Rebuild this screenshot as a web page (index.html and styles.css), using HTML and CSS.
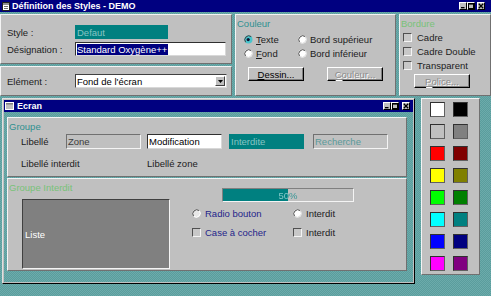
FILE: index.html
```html
<!DOCTYPE html>
<html lang="fr">
<head>
  <meta charset="UTF-8">
  <title>Définition des Styles - DEMO</title>
  <link rel="stylesheet" href="styles.css">
</head>
<body>
<div class="window main">
  <div class="titlebar">
    <svg class="ticon" width="8" height="9" viewBox="0 0 8 9">
      <rect x="0.5" y="0.5" width="7" height="8" fill="#fff" stroke="#202020"/>
      <rect x="1" y="1" width="6" height="2" fill="#909090"/>
      <path d="M2 4.5h4M2 6.5h4" stroke="#707070"/>
    </svg>
    <span class="caption">Définition des Styles - DEMO</span>
    <span class="ctrls">
      <span class="ctrl"><svg width="6" height="6" viewBox="0 0 6 6"><rect x="1" y="4" width="3.5" height="1.3" fill="#000"/></svg></span>
      <span class="ctrl"><svg width="6" height="6" viewBox="0 0 6 6"><rect x="0.5" y="0.5" width="5" height="5" fill="none" stroke="#000"/><rect x="0" y="0" width="6" height="1.6" fill="#000"/></svg></span>
      <span class="ctrl close"><svg width="6" height="6" viewBox="0 0 6 6"><path d="M0.8 0.8L5.2 5.2M5.2 0.8L0.8 5.2" stroke="#000" stroke-width="1.3"/></svg></span>
    </span>
  </div>
  <div class="main-body">
    <div class="left-col">
      <div class="panel ident">
        <span class="lbl">Style :</span>
        <span class="field teal style-f">Defaut</span>
        <span class="lbl">Désignation :</span>
        <span class="field white desig-f"><span class="sel">Standard Oxygène++</span></span>
      </div>
      <div class="panel elem">
        <span class="lbl">Elément :</span>
        <span class="combo">
          <span class="combo-text">Fond de l'écran</span>
          <span class="combo-btn"><svg width="5" height="3" viewBox="0 0 5 3"><path d="M0 0h5L2.5 3z" fill="#000"/></svg></span>
        </span>
      </div>
    </div>

    <div class="panel couleur">
      <div class="gtitle teal-t">Couleur</div>
      <div class="radios">
        <span class="opt">
          <svg class="radio" width="9" height="9" viewBox="0 0 9 9"><circle cx="4.5" cy="4.5" r="4" fill="#48c4cc"/><path d="M1.6 7.2A4 4 0 0 1 7.2 1.6" fill="none" stroke="#404040"/><circle cx="4.2" cy="4.6" r="1.6" fill="#101030"/></svg>
          <span><u>T</u>exte</span>
        </span>
        <span class="opt">
          <svg class="radio" width="9" height="9" viewBox="0 0 9 9"><circle cx="4.5" cy="4.5" r="4" fill="#fff"/><path d="M1.6 7.2A4 4 0 0 1 7.2 1.6" fill="none" stroke="#505050"/><path d="M7.4 1.8A4 4 0 0 1 1.8 7.4" fill="none" stroke="#dcdcdc"/></svg>
          <span>Bord supérieur</span>
        </span>
        <span class="opt">
          <svg class="radio" width="9" height="9" viewBox="0 0 9 9"><circle cx="4.5" cy="4.5" r="4" fill="#fff"/><path d="M1.6 7.2A4 4 0 0 1 7.2 1.6" fill="none" stroke="#505050"/><path d="M7.4 1.8A4 4 0 0 1 1.8 7.4" fill="none" stroke="#dcdcdc"/></svg>
          <span><u>F</u>ond</span>
        </span>
        <span class="opt">
          <svg class="radio" width="9" height="9" viewBox="0 0 9 9"><circle cx="4.5" cy="4.5" r="4" fill="#fff"/><path d="M1.6 7.2A4 4 0 0 1 7.2 1.6" fill="none" stroke="#505050"/><path d="M7.4 1.8A4 4 0 0 1 1.8 7.4" fill="none" stroke="#dcdcdc"/></svg>
          <span>Bord inférieur</span>
        </span>
      </div>
      <div class="btn-row">
        <span class="btn"><span><u>D</u>essin...</span></span>
        <span class="btn disabled"><span><u>C</u>ouleur...</span></span>
      </div>
    </div>

    <div class="panel bordure">
      <div class="gtitle green-t">Bordure</div>
      <div class="chk"><span class="box"></span>Cadre</div>
      <div class="chk"><span class="box"></span>Cadre Double</div>
      <div class="chk"><span class="box"></span>Transparent</div>
      <span class="btn disabled police"><span><u>P</u>olice...</span></span>
    </div>
  </div>
</div>

<div class="lower">
  <div class="window ecran">
    <div class="titlebar">
      <svg class="ticon" width="9" height="8" viewBox="0 0 9 8">
        <rect x="0.5" y="0.5" width="8" height="7" fill="#c0c0c0" stroke="#fff"/>
        <rect x="1" y="1" width="7" height="1.5" fill="#808080"/>
      </svg>
      <span class="caption">Ecran</span>
      <span class="ctrls">
        <span class="ctrl"><svg width="6" height="6" viewBox="0 0 6 6"><rect x="1" y="4" width="3.5" height="1.3" fill="#000"/></svg></span>
        <span class="ctrl"><svg width="6" height="6" viewBox="0 0 6 6"><rect x="0.5" y="0.5" width="5" height="5" fill="none" stroke="#000"/><rect x="0" y="0" width="6" height="1.6" fill="#000"/></svg></span>
        <span class="ctrl close"><svg width="6" height="6" viewBox="0 0 6 6"><path d="M0.8 0.8L5.2 5.2M5.2 0.8L0.8 5.2" stroke="#000" stroke-width="1.3"/></svg></span>
      </span>
    </div>
    <div class="client">
      <div class="panel groupe">
        <div class="gtitle teal-t">Groupe</div>
        <div class="g-row">
          <span class="g-lbl">Libellé</span>
          <span class="field sunk zone">Zone</span>
          <span class="field white modif">Modification</span>
          <span class="field teal interd">Interdite</span>
          <span class="field sunk rech">Recherche</span>
        </div>
        <div class="g-row2">
          <span class="g-lbl2">Libellé interdit</span>
          <span>Libellé zone</span>
        </div>
      </div>
      <div class="panel groupe-int">
        <div class="gi-left">
          <div class="gtitle green-t">Groupe Interdit</div>
          <div class="liste">Liste</div>
        </div>
        <div class="gi-right">
          <div class="progress">
            <span class="progress-text">50%</span>
          </div>
          <div class="gi-line first">
            <span class="opt wide navy">
              <svg class="radio" width="9" height="9" viewBox="0 0 9 9"><circle cx="4.5" cy="4.5" r="4" fill="#e8e8e8"/><path d="M1.6 7.2A4 4 0 0 1 7.2 1.6" fill="none" stroke="#505050"/><path d="M7.4 1.8A4 4 0 0 1 1.8 7.4" fill="none" stroke="#fff"/></svg>
              <span>Radio bouton</span>
            </span>
            <span class="opt">
              <svg class="radio" width="9" height="9" viewBox="0 0 9 9"><circle cx="4.5" cy="4.5" r="4" fill="#fff"/><path d="M1.6 7.2A4 4 0 0 1 7.2 1.6" fill="none" stroke="#505050"/><path d="M7.4 1.8A4 4 0 0 1 1.8 7.4" fill="none" stroke="#dcdcdc"/></svg>
              <span>Interdit</span>
            </span>
          </div>
          <div class="gi-line">
            <span class="opt wide navy"><span class="box"></span><span>Case à cocher</span></span>
            <span class="opt"><span class="box"></span><span>Interdit</span></span>
          </div>
        </div>
      </div>
    </div>
  </div>

  <div class="panel palette">
    <span class="sw" style="background:#ffffff"></span>
    <span class="sw" style="background:#000000"></span>
    <span class="sw" style="background:#c0c0c0"></span>
    <span class="sw" style="background:#808080"></span>
    <span class="sw" style="background:#ff0000"></span>
    <span class="sw" style="background:#800000"></span>
    <span class="sw" style="background:#ffff00"></span>
    <span class="sw" style="background:#808000"></span>
    <span class="sw" style="background:#00ff00"></span>
    <span class="sw" style="background:#008000"></span>
    <span class="sw" style="background:#00ffff"></span>
    <span class="sw" style="background:#008080"></span>
    <span class="sw" style="background:#0000ff"></span>
    <span class="sw" style="background:#000080"></span>
    <span class="sw" style="background:#ff00ff"></span>
    <span class="sw" style="background:#800080"></span>
  </div>
</div>
</body>
</html>
```

FILE: styles.css
```css
html,body{
    margin:0;
}
body{
    width:491px;
    height:296px;
    overflow:hidden;
    background:#62a3a3;
    background-image:repeating-conic-gradient(#5a9d9d 0 25%, #6cabab 0 50%);
    background-size:2px 2px;
    font-family:"Liberation Sans", Arial, sans-serif;
    font-size:9.5px;
    color:#1c1c1c;
}
*{
    box-sizing:border-box;
}

/* title bars */
.titlebar{
    display:flex;
    align-items:center;
    height:12px;
    background:#000080;
    color:#fff;
    font-weight:bold;
    font-size:9px;
}
.main .titlebar{
    padding:0 6px 0 2px;
}
.ecran .titlebar{
    padding:0 3px 0 1px;
}
.ticon{
    margin-right:2px;
    flex:none;
}
.ecran .ticon{
    margin-right:3px;
}
.caption{
    flex:1;
    white-space:nowrap;
}
.ctrls{
    display:flex;
    gap:0;
}
.ctrl{
    display:flex;
    align-items:center;
    justify-content:center;
    width:8px;
    height:8px;
    background:#c0c0c0;
    border:1px solid;
    border-color:#fff #000 #000 #fff;
}
.ctrl.close{
    margin-left:2px;
}
.ecran .ctrl.close{
    margin-left:3px;
}

/* panels */
.panel{
    background:#c0c0c0;
    border:1px solid;
    border-color:#f4f4f4 #707070 #707070 #f4f4f4;
}
.gtitle{
    line-height:11px;
    padding:3px 0 0 1px;
    white-space:nowrap;
}
.teal-t{ color:#2f9090; }
.green-t{ color:#78c278; }

.main-body{
    display:flex;
    gap:3px;
    height:86px;
    padding:2px 0;
}
.left-col{
    display:flex;
    flex-direction:column;
    gap:2px;
    width:232px;
}
.ident{
    display:grid;
    grid-template-columns:68px auto;
    grid-auto-rows:14px;
    row-gap:3px;
    align-items:center;
    height:50px;
    padding:10px 0 0 6px;
}
.elem{
    flex:1;
    display:flex;
    align-items:center;
    padding-left:6px;
}
.elem .lbl{
    width:68px;
}

/* fields */
.field{
    display:flex;
    align-items:center;
    height:14px;
    padding-left:2px;
    white-space:nowrap;
    overflow:hidden;
}
.field.teal{
    background:#008080;
    color:#86c4c4;
}
.field.white{
    background:#fff;
    color:#000;
    border:1px solid;
    border-color:#303030 #d8d8d8 #d8d8d8 #303030;
    padding-left:1px;
}
.field.sunk{
    background:#c0c0c0;
    border:1px solid;
    border-color:#707070 #f4f4f4 #f4f4f4 #707070;
    padding-left:1px;
}
.style-f{ width:93px; }
.desig-f{ width:151px; }
.sel{
    background:#000080;
    color:#fff;
    padding-right:1px;
}

.combo{
    display:flex;
    align-items:center;
    width:152px;
    height:14px;
    background:#fff;
    border:1px solid;
    border-color:#404040 #d8d8d8 #d8d8d8 #404040;
    padding:0 1px 0 1px;
    color:#000;
}
.combo-text{
    flex:1;
}
.combo-btn{
    display:flex;
    align-items:center;
    justify-content:center;
    width:10px;
    height:10px;
    background:#c0c0c0;
    border:1px solid;
    border-color:#fff #404040 #404040 #fff;
}

/* couleur */
.couleur{
    width:161px;
}
.radios{
    display:grid;
    grid-template-columns:54px auto;
    grid-auto-rows:14px;
    margin-top:3px;
    padding-left:8px;
}
.opt{
    display:flex;
    align-items:center;
    gap:3px;
    white-space:nowrap;
}
.radio{
    flex:none;
}
.btn-row{
    display:flex;
    gap:23px;
    margin-top:7px;
    padding-left:12px;
}
.btn{
    display:flex;
    align-items:center;
    justify-content:center;
    width:56px;
    height:14px;
    background:#c0c0c0;
    border:1px solid;
    border-color:#fff #000 #000 #fff;
    box-shadow:inset -1px -1px 0 #808080;
    color:#000;
    white-space:nowrap;
}
.btn.disabled{
    color:#8c8c8c;
    text-shadow:1px 1px 0 #fff;
}

/* bordure */
.bordure{
    width:92px;
}
.chk{
    display:flex;
    align-items:center;
    gap:5px;
    height:14px;
    padding-left:3px;
    white-space:nowrap;
}
.bordure .gtitle{
    margin-bottom:1px;
}
.box{
    flex:none;
    width:9px;
    height:9px;
    background:#c8c8c8;
    border:1px solid;
    border-color:#505050 #f4f4f4 #f4f4f4 #505050;
}
.police{
    margin:2px 0 0 14px;
}

/* lower part */
.lower{
    display:flex;
    gap:6px;
}
.ecran{
    width:413px;
    height:186px;
    margin-left:2px;
    background:#c0c0c0;
    border:1px solid;
    border-color:#e0e0e0 #000 #000 #e0e0e0;
    padding:1px;
}
.client{
    height:170px;
    background:#62a3a3;
    background-image:repeating-conic-gradient(#5a9d9d 0 25%, #6cabab 0 50%);
    background-size:2px 2px;
    padding:5px 0 0 3px;
}
.groupe{
    width:400px;
    height:60px;
}
.g-row{
    display:flex;
    align-items:center;
    margin-top:2px;
    padding-left:13px;
}
.g-row .field{
    width:75px;
    height:15px;
}
.g-lbl{
    width:45px;
}
.modif{ margin-left:6px; }
.interd{ margin-left:7px; }
.rech{
    margin-left:9px;
    color:#5a9a9a;
}
.zone{
    color:#3c3c3c;
}
.interd{
    color:#b4dcdc;
}
.g-row2{
    display:flex;
    align-items:center;
    height:14px;
    margin-top:7px;
    padding-left:13px;
}
.g-lbl2{
    width:126px;
}

.groupe-int{
    display:flex;
    width:400px;
    height:93px;
    margin-top:1px;
}
.gi-left{
    width:184px;
}
.liste{
    display:flex;
    align-items:center;
    width:148px;
    height:70px;
    margin:6px 0 0 14px;
    padding-left:2px;
    background:#808080;
    color:#fff;
    border:1px solid;
    border-color:#404040 #f4f4f4 #f4f4f4 #404040;
}
.gi-right{
    padding-top:9px;
}
.progress{
    display:flex;
    width:132px;
    height:14px;
    margin-left:30px;
    background:linear-gradient(90deg, #008080 0 50%, #c0c0c0 50% 100%);
    border:1px solid;
    border-color:#808080 #f4f4f4 #f4f4f4 #808080;
}
.progress-text{
    flex:1;
    display:flex;
    align-items:center;
    justify-content:center;
    background:linear-gradient(90deg, #8ccccc 0 50%, #2e9494 50% 100%);
    -webkit-background-clip:text;
    background-clip:text;
    color:transparent;
}
.gi-line{
    display:flex;
    align-items:center;
    height:14px;
    margin-top:5px;
}
.gi-line.first{
    margin-top:4px;
}
.opt.wide{
    width:101px;
    gap:4px;
}
.gi-line .opt{
    gap:4px;
}
.navy{
    color:#24248a;
}

/* palette */
.palette{
    display:grid;
    grid-template-columns:15px 15px;
    grid-auto-rows:15px;
    column-gap:8px;
    row-gap:7px;
    align-content:start;
    width:59px;
    height:177px;
    padding:3px 0 0 8px;
}
.sw{
    border:1px solid;
    border-color:#303030 #606060 #606060 #303030;
}
```
